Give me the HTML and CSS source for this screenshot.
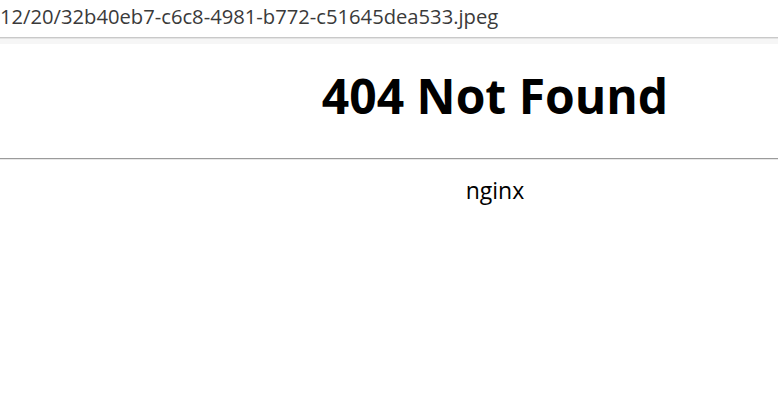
FILE: index.html
```html
<!DOCTYPE html>
<html>
<head>
<meta charset="utf-8">
<title>404 Not Found</title>
<link rel="stylesheet" href="styles.css">
</head>
<body>
<div class="urlbar"><span class="url">12/20/32b40eb7-c6c8-4981-b772-c51645dea533.jpeg</span></div>
<div class="page">
  <h1 class="title">404 Not Found</h1>
  <hr class="rule">
  <div class="server">nginx</div>
</div>
</body>
</html>
```

FILE: styles.css
```css
html, body {
  margin: 0;
  padding: 0;
  background: #ffffff;
  overflow: hidden;
}
body {
  font-family: "Open Sans", "Noto Sans", sans-serif;
  color: #000;
}
.urlbar {
  height: 37px;
  border-bottom: 1px solid #c9c9c9;
  box-shadow: 0 1px 0 #e4e4e4;
  display: flex;
  align-items: center;
  background: #fff;
  overflow: hidden;
}
.url {
  font-size: 20.2px;
  color: #3a3a3a;
  white-space: nowrap;
  margin-top: -5px;
}
.page {
  border-top: 5px solid #f6f6f6;
  margin-top: 1px;
}
.title {
  margin: 0;
  padding: 19px 0 0 212px;
  text-align: center;
  font-size: 48px;
  font-weight: 700;
  line-height: 65px;
}
.rule {
  margin: 30px 0 0 0;
  border: 0;
  border-top: 1px solid #9b9b9b;
  border-bottom: 1px solid #e8e8e8;
  height: 0;
}
.server {
  text-align: center;
  font-size: 23px;
  padding: 14px 0 0 212px;
}
```
